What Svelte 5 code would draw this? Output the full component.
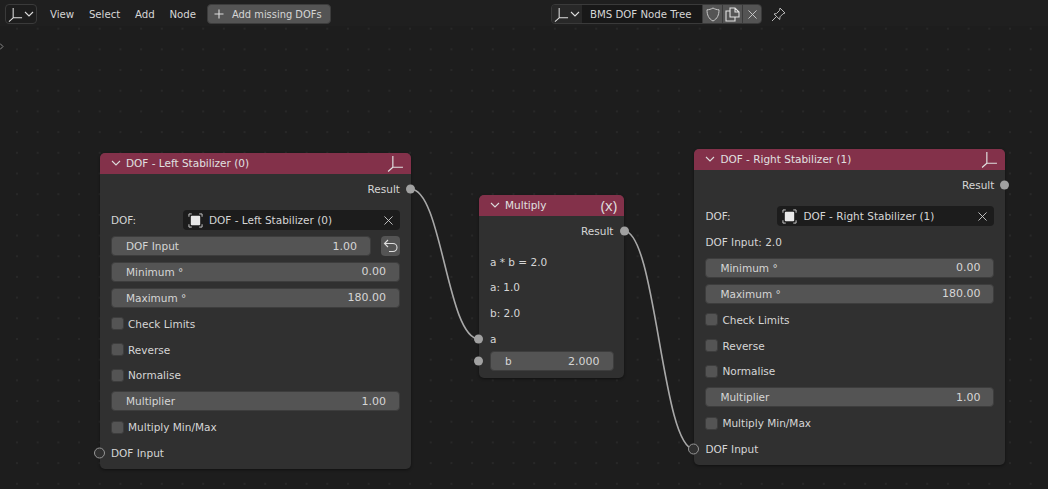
<script>
  const left = {
    title: "DOF - Left Stabilizer (0)",
    cls: "left",
  };
  const right = {
    title: "DOF - Right Stabilizer (1)",
    cls: "right",
  };
</script>

{#snippet axes(size)}
  <svg class="axes" width={size} height={size} viewBox="0 0 16 16" fill="none" stroke="#e0e0e0" stroke-width="1.1">
    <path d="M5.5 1v10.500H15M5.500 11.500L1 15.500" />
  </svg>
{/snippet}

{#snippet chevron()}
  <svg class="chev" width="10" height="8" viewBox="0 0 10 8" fill="none" stroke="#dcdcdc" stroke-width="1.1">
    <path d="M1 2l4 4 4-4" />
  </svg>
{/snippet}

{#snippet cross(size)}
  <svg width={size} height={size} viewBox="0 0 10 10" fill="none" stroke="#d0d0d0" stroke-width="1">
    <path d="M.5.5l9 9M9.5.5l-9 9" />
  </svg>
{/snippet}

{#snippet field(label, value)}
  <div class="field"><span>{label}</span><span class="value">{value}</span></div>
{/snippet}

{#snippet check(label)}
  <div class="row"><i class="box"></i><span>{label}</span></div>
{/snippet}

{#snippet dofPicker(title)}
  <div class="row picker-row">
    <span class="picker-label">DOF:</span>
    <div class="picker">
      <svg width="15" height="15" viewBox="0 0 16 16" fill="none" stroke="#cfcfcf" stroke-width="1">
        <path d="M4 1H1v3M12 1h3v3M4 15H1v-3M12 15h3v-3" />
        <rect x="3" y="3" width="10" height="10" rx="1" fill="#e8e8e8" stroke="none" />
      </svg>
      <span class="picker-text">{title}</span>
      {@render cross(9)}
    </div>
  </div>
{/snippet}

<div class="editor">
  <header class="bar">
    <div class="type-btn">{@render axes(15)}{@render chevron()}</div>
    <nav>
      <span>View</span>
      <span>Select</span>
      <span>Add</span>
      <span>Node</span>
    </nav>
    <div class="op-btn">
      <svg width="10" height="10" viewBox="0 0 10 10" stroke="#dcdcdc" stroke-width="1.1"><path d="M5 .5v9M.5 5h9" /></svg>
      <span>Add missing DOFs</span>
    </div>

    <div class="tree">
      <div class="tree-type">{@render axes(15)}{@render chevron()}</div>
      <div class="tree-name">BMS DOF Node Tree</div>
      <div class="tree-btn wide">
        <svg width="14" height="15" viewBox="0 0 14 15" fill="none" stroke="#c8c8c8" stroke-width="1"><path d="M7 1c2 1.200 3.800 1.700 6 1.800 0 5-1.600 9-6 11.200C2.600 11.800 1 7.800 1 2.800 3.200 2.700 5 2.200 7 1z" /></svg>
      </div>
      <div class="tree-btn wide">
        <svg width="15" height="15" viewBox="0 0 15 15" fill="none" stroke="#e0e0e0" stroke-width="1.100"><path d="M5 1h5l4 4v5H5zM10 1v4h4M5 4H1v10h9v-4" /></svg>
      </div>
      <div class="tree-btn last">{@render cross(9)}</div>
    </div>
    <svg class="pin" width="15" height="15" viewBox="0 0 15 15" fill="none" stroke="#b8b8b8" stroke-width="1">
      <path d="M9 1l5 5-2 .8-3 3-.3 2.700L3 7l2.500-.5 3-3zM5.500 9.500L1 14" />
    </svg>
  </header>

  <svg class="sidebar-arrow" width="5" height="7" viewBox="0 0 5 7" fill="none" stroke="#8a8a8a"><path d="M1 .5l3 3-3 3" /></svg>

  <svg class="wires" width="1048" height="489" fill="none" stroke="#a8a8a8" stroke-width="1.600">
    <path d="M410.500 189C442 189 447 339 479 339" />
    <path d="M624 231C656 231 662 449 694 449" />
  </svg>

  <section class="node {left.cls}">
    <div class="node-head">
      {@render chevron()}<span class="node-title">{left.title}</span>{@render axes(17)}
    </div>
    <div class="node-body">
      <div class="row output">Result<i class="socket out"></i></div>
      <div class="spacer"></div>
      {@render dofPicker(left.title)}
      <div class="input-row">
        {@render field("DOF Input", "1.00")}
        <div class="reset">
          <svg width="15" height="14" viewBox="0 0 15 14" fill="none" stroke="#dedede" stroke-width="1.100">
            <path d="M5 1L1.500 4.500 5 8M1.500 4.500H10a3.800 3.800 0 010 8H6" />
          </svg>
        </div>
      </div>
      {@render field("Minimum °", "0.00")}
      {@render field("Maximum °", "180.00")}
      {@render check("Check Limits")}
      {@render check("Reverse")}
      {@render check("Normalise")}
      {@render field("Multiplier", "1.00")}
      {@render check("Multiply Min/Max")}
      <div class="row">DOF Input<i class="socket in hollow"></i></div>
    </div>
  </section>

  <section class="node multiply">
    <div class="node-head">
      {@render chevron()}<span class="node-title">Multiply</span><span class="fx">(x)</span>
    </div>
    <div class="node-body">
      <div class="row output">Result<i class="socket out"></i></div>
      <div class="spacer small"></div>
      <div class="row">a * b = 2.0</div>
      <div class="row">a: 1.0</div>
      <div class="row">b: 2.0</div>
      <div class="row">a<i class="socket in"></i></div>
      <div class="socket-field">{@render field("b", "2.000")}<i class="socket in"></i></div>
    </div>
  </section>

  <section class="node {right.cls}">
    <div class="node-head">
      {@render chevron()}<span class="node-title">{right.title}</span>{@render axes(17)}
    </div>
    <div class="node-body">
      <div class="row output">Result<i class="socket out"></i></div>
      <div class="spacer"></div>
      {@render dofPicker(right.title)}
      <div class="row">DOF Input: 2.0</div>
      {@render field("Minimum °", "0.00")}
      {@render field("Maximum °", "180.00")}
      {@render check("Check Limits")}
      {@render check("Reverse")}
      {@render check("Normalise")}
      {@render field("Multiplier", "1.00")}
      {@render check("Multiply Min/Max")}
      <div class="row">DOF Input<i class="socket in hollow"></i></div>
    </div>
  </section>
</div>

<style>
  :global(body) {
    background: #1d1d1d;
    overflow: hidden;
  }

  .editor {
    position: relative;
    width: 1048px;
    height: 489px;
    overflow: hidden;
    font-family: "DejaVu Sans", sans-serif;
    font-size: 10.5px;
    color: #d6d6d6;
    background-color: #1d1d1d;
    background-image: radial-gradient(circle at 1px 1px, #282828 1px, transparent 1.2px);
    background-size: 20.7px 20.7px;
    background-position: 16px 7px;
  }

  .bar {
    display: flex;
    align-items: center;
    height: 26px;
    padding: 2px 0 0 5px;
    box-sizing: border-box;
    background: #1f1f1f;
    font-size: 10.2px;
    white-space: nowrap;
  }

  .type-btn {
    display: flex;
    align-items: center;
    justify-content: center;
    gap: 1px;
    width: 32px;
    height: 20px;
    box-sizing: border-box;
    border: 1px solid #3a3a3a;
    border-radius: 4px;
    background: #1d1d1d;
  }

  nav {
    display: flex;
    gap: 14.7px;
    width: 145px;
    margin-left: 13px;
  }

  .op-btn {
    display: flex;
    align-items: center;
    gap: 8px;
    width: 124px;
    height: 20px;
    margin-left: 12px;
    padding-left: 6px;
    box-sizing: border-box;
    background: #545454;
    border-radius: 4px;
    border: 1px solid #3c3c3c;
    font-size: 9.9px;
  }

  .tree {
    display: flex;
    height: 20px;
    margin-left: 220px;
    border-radius: 4px;
    overflow: hidden;
    border: 1px solid #3a3a3a;
    box-sizing: border-box;
  }

  .tree-type {
    display: flex;
    align-items: center;
    justify-content: center;
    gap: 1px;
    width: 30px;
    background: #282828;
  }

  .tree-name {
    display: flex;
    align-items: center;
    width: 120px;
    padding-left: 8px;
    box-sizing: border-box;
    background: #181818;
  }

  .tree-btn {
    display: flex;
    align-items: center;
    justify-content: center;
    box-sizing: border-box;
    background: #545454;
    border-left: 1px solid #3a3a3a;
  }

  .tree-btn.wide { width: 20px; }
  .tree-btn.last { width: 19px; }

  .pin { margin-left: 9px; }

  .sidebar-arrow {
    position: absolute;
    left: -1px;
    top: 43px;
  }

  .wires {
    position: absolute;
    left: 0;
    top: 0;
    pointer-events: none;
  }

  .node {
    position: absolute;
    box-sizing: border-box;
    background: #303030;
    border-radius: 5px;
    box-shadow: 0 1px 3px rgba(0, 0, 0, 0.45);
  }

  .node.left { left: 100px; top: 153px; width: 310.5px; height: 316px; }
  .node.multiply { left: 479px; top: 195px; width: 145px; height: 183px; }
  .node.right { left: 694.4px; top: 149px; width: 310.500px; height: 316px; }

  .node-head {
    display: flex;
    align-items: center;
    height: 21px;
    padding: 0 7px 1px 11px;
    box-sizing: border-box;
    background: #83314a;
    border-radius: 5px 5px 0 0;
    color: #e0e0e0;
  }

  .node-title {
    flex: 1;
    margin-left: 5px;
  }

  .fx {
    font-size: 14.5px;
    font-family: "Open Sans", sans-serif;
    margin-right: 0;
  }

  .node-body {
    display: flex;
    flex-direction: column;
    gap: 5.85px;
    padding: 5px 10.500px 0 11px;
  }

  .row {
    position: relative;
    display: flex;
    align-items: center;
    gap: 4px;
    height: 20px;
    flex: none;
  }

  .output { justify-content: flex-end; }

  .spacer { height: 0; margin-top: -.4px; }
  .spacer.small { margin-top: -1.1px; }

  .socket {
    position: absolute;
    width: 9px;
    height: 9px;
    border-radius: 50%;
    background: #a1a1a1;
    box-sizing: border-box;
    top: 50%;
    transform: translateY(-50%);
  }

  .socket.out { right: -15px; }
  .socket.in { left: -16px; }
  .socket.hollow {
    width: 11px;
    height: 11px;
    left: -17px;
    background: #303030;
    border: 1px solid #969696;
  }

  .picker-row { gap: 0; }

  .picker-label { width: 72px; }

  .picker {
    flex: 1;
    display: flex;
    align-items: center;
    height: 20px;
    padding: 0 7px 0 5px;
    background: #1c1c1c;
    border-radius: 4px;
  }

  .picker-text {
    flex: 1;
    margin-left: 6px;
  }

  .field {
    flex: 1 0 auto;
    display: flex;
    justify-content: space-between;
    align-items: center;
    height: 20px;
    padding: 0 13px 0 14px;
    box-sizing: border-box;
    background: #545454;
    border: 1px solid #3d3d3d;
    border-radius: 4px;
  }

  .value { font-size: 11px; }

  .input-row {
    display: flex;
    gap: 10px;
    align-items: center;
    height: 20px;
    flex: none;
  }

  .input-row .field { flex: 1; }

  .reset {
    display: flex;
    align-items: center;
    justify-content: center;
    width: 19px;
    height: 20px;
    background: #545454;
    border-radius: 4px;
    flex: none;
  }

  .box {
    width: 13px;
    height: 13px;
    box-sizing: border-box;
    background: #545454;
    border: 1px solid #3d3d3d;
    border-radius: 3px;
  }

  .socket-field {
    position: relative;
    display: flex;
    height: 20px;
    flex: none;
    margin-top: -3.5px;
  }
</style>
